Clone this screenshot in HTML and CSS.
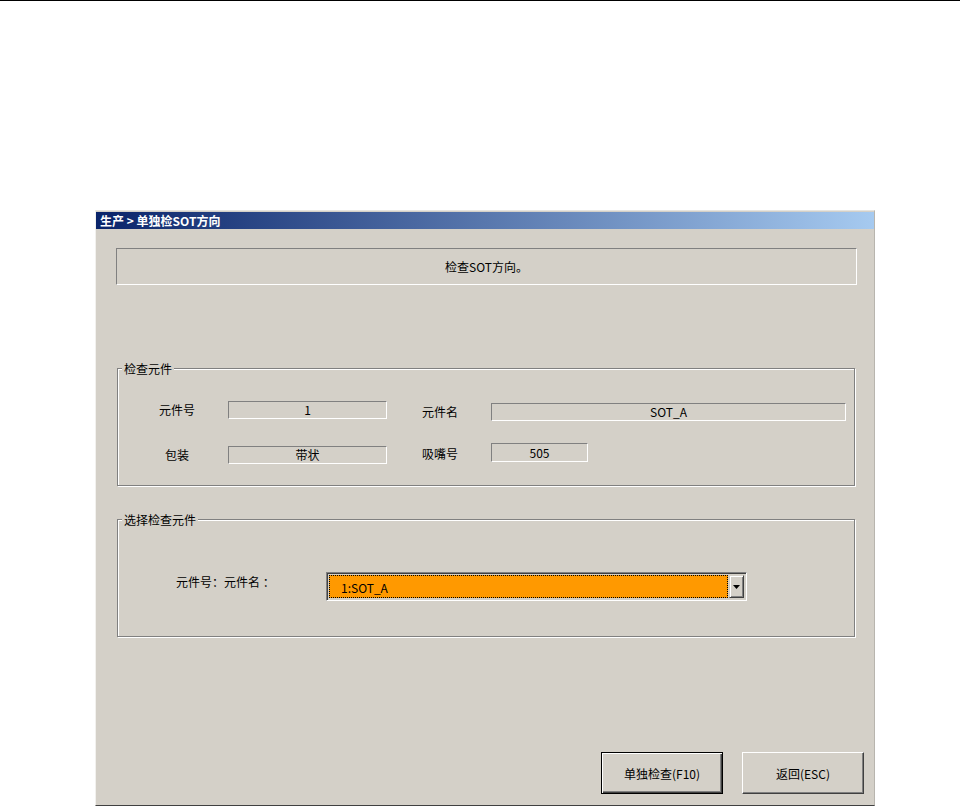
FILE: index.html
```html
<!DOCTYPE html>
<html lang="zh-CN">
<head>
	<meta charset="UTF-8">
	<title>单独检SOT方向</title>
	<link rel="stylesheet" href="styles.css">
</head>
<body>
	<div class="topline"></div>

	<div class="window">
		<div class="titlebar">生产 &gt; 单独检SOT方向</div>

		<div class="msgbox">检查SOT方向。</div>

		<!-- 检查元件 -->
		<div class="group group_info">
			<span class="legend">检查元件</span>
			<div class="row row_1">
				<span class="lbl lbl_left">元件号</span>
				<span class="field field_no">1</span>
				<span class="lbl lbl_right lbl_down2">元件名</span>
				<span class="field field_name field_down2">SOT_A</span>
			</div>
			<div class="row row_2">
				<span class="lbl lbl_left lbl_down3">包装</span>
				<span class="field field_no field_down3">带状</span>
				<span class="lbl lbl_right lbl_down2">吸嘴号</span>
				<span class="field field_nozzle">505</span>
			</div>
		</div>

		<!-- 选择检查元件 -->
		<div class="group group_select">
			<span class="legend">选择检查元件</span>
			<div class="row">
				<span class="select_lbl">元件号：元件名 ：</span>
				<div class="combo">
					<div class="combo_val"><span>1:SOT_A</span></div>
					<div class="combo_btn">
						<svg width="7" height="4" viewBox="0 0 7 4"><polygon points="0,0 7,0 3.5,4" fill="#000"/></svg>
					</div>
				</div>
			</div>
		</div>

		<div class="buttons">
			<button class="btn btn_default">单独检查(F10)</button>
			<button class="btn">返回(ESC)</button>
		</div>
	</div>
</body>
</html>
```

FILE: styles.css
```css
*{
	margin:0;
	padding:0;
	box-sizing:border-box;
}

body{
	background-color:#fff;
	font-family:"Noto Sans CJK SC","Liberation Sans",sans-serif;
	font-size:12px;
	color:#000;
}

.topline{
	width:960px;
	height:1px;
	background-color:#000;
}

.window{
	margin:209px 0 0 95px;
	width:780px;
	height:596px;
	padding-top:1px;
	background-color:#d4d0c8;
	border-top:solid 1px #e6e4df;
	border-left:solid 1px #f2f1ee;
	border-right:solid 1px #b8b5ae;
	border-bottom:solid 1px #404040;
}

.titlebar{
	height:17px;
	line-height:17px;
	padding-left:4px;
	color:#fff;
	font-weight:bold;
	background:linear-gradient(to right,#0a246a,#a6caf0);
}

.msgbox{
	margin:19px 0 0 20px;
	width:741px;
	height:37px;
	line-height:35px;
	text-align:center;
	border-top:solid 1px #808080;
	border-left:solid 1px #808080;
	border-right:solid 1px #fff;
	border-bottom:solid 1px #fff;
}

/* etched group box */
.group{
	position:relative;
	margin-left:21px;
	width:738px;
	height:118px;
	border:solid 1px #808080;
	box-shadow:inset 1px 1px 0 #fff,1px 1px 0 #fff;
}

.group_info{
	margin-top:83px;
	padding-top:32px;
}

.group_select{
	margin-top:33px;
	padding-top:52px;
}

.legend{
	position:absolute;
	left:4px;
	top:-8px;
	padding:0 2px;
	line-height:15px;
	background-color:#d4d0c8;
}

.row{
	display:flex;
	align-items:flex-start;
	height:20px;
}

.row_2{
	margin-top:22px;
}

.lbl{
	line-height:18px;
}

.lbl_left{
	margin-left:8px;
	width:102px;
	text-align:center;
}

.lbl_right{
	margin-left:35px;
	width:69px;
}

.lbl_down2{ margin-top:2px; }
.lbl_down3{ margin-top:3px; }

.field{
	height:18px;
	line-height:16px;
	text-align:center;
	border-top:solid 1px #808080;
	border-left:solid 1px #808080;
	border-right:solid 1px #fff;
	border-bottom:solid 1px #fff;
}

.field_no{ width:159px; }
.field_name{ width:355px; }
.field_nozzle{ width:97px; height:19px; line-height:17px; }

.field_down2{ margin-top:2px; }
.field_down3{ margin-top:3px; }

.select_lbl{
	margin-left:58px;
	width:150px;
	line-height:20px;
}

.combo{
	display:flex;
	width:421px;
	height:29px;
	padding:2px;
	border-top:solid 1px #808080;
	border-left:solid 1px #808080;
	border-right:solid 1px #fff;
	border-bottom:solid 1px #fff;
	box-shadow:inset 1px 1px 0 #404040,inset -1px -1px 0 #d4d0c8;
}

.combo_val{
	flex:1;
	margin-right:1px;
	padding-left:12px;
	line-height:25px;
	background-color:#ff9900;
	outline:dotted 1px #000;
	outline-offset:-1px;
}

.combo_btn{
	display:flex;
	align-items:center;
	justify-content:center;
	width:15px;
	border-top:solid 1px #d4d0c8;
	border-left:solid 1px #d4d0c8;
	border-right:solid 1px #404040;
	border-bottom:solid 1px #404040;
	box-shadow:inset 1px 1px 0 #fff,inset -1px -1px 0 #808080;
}

.buttons{
	display:flex;
	justify-content:flex-end;
	gap:19px;
	margin-top:115px;
	padding-right:10px;
}

.btn{
	width:122px;
	height:42px;
	font-family:"Noto Sans CJK SC","Liberation Sans",sans-serif;
	font-size:12px;
	color:#000;
	background-color:#d4d0c8;
	border-style:solid;
	border-width:1px;
	border-color:#fff #404040 #404040 #fff;
	box-shadow:inset -1px -1px 0 #808080;
}

.btn_default{
	border-color:#000;
	box-shadow:inset 1px 1px 0 #fff,inset -1px -1px 0 #404040,inset -2px -2px 0 #808080;
}
```
